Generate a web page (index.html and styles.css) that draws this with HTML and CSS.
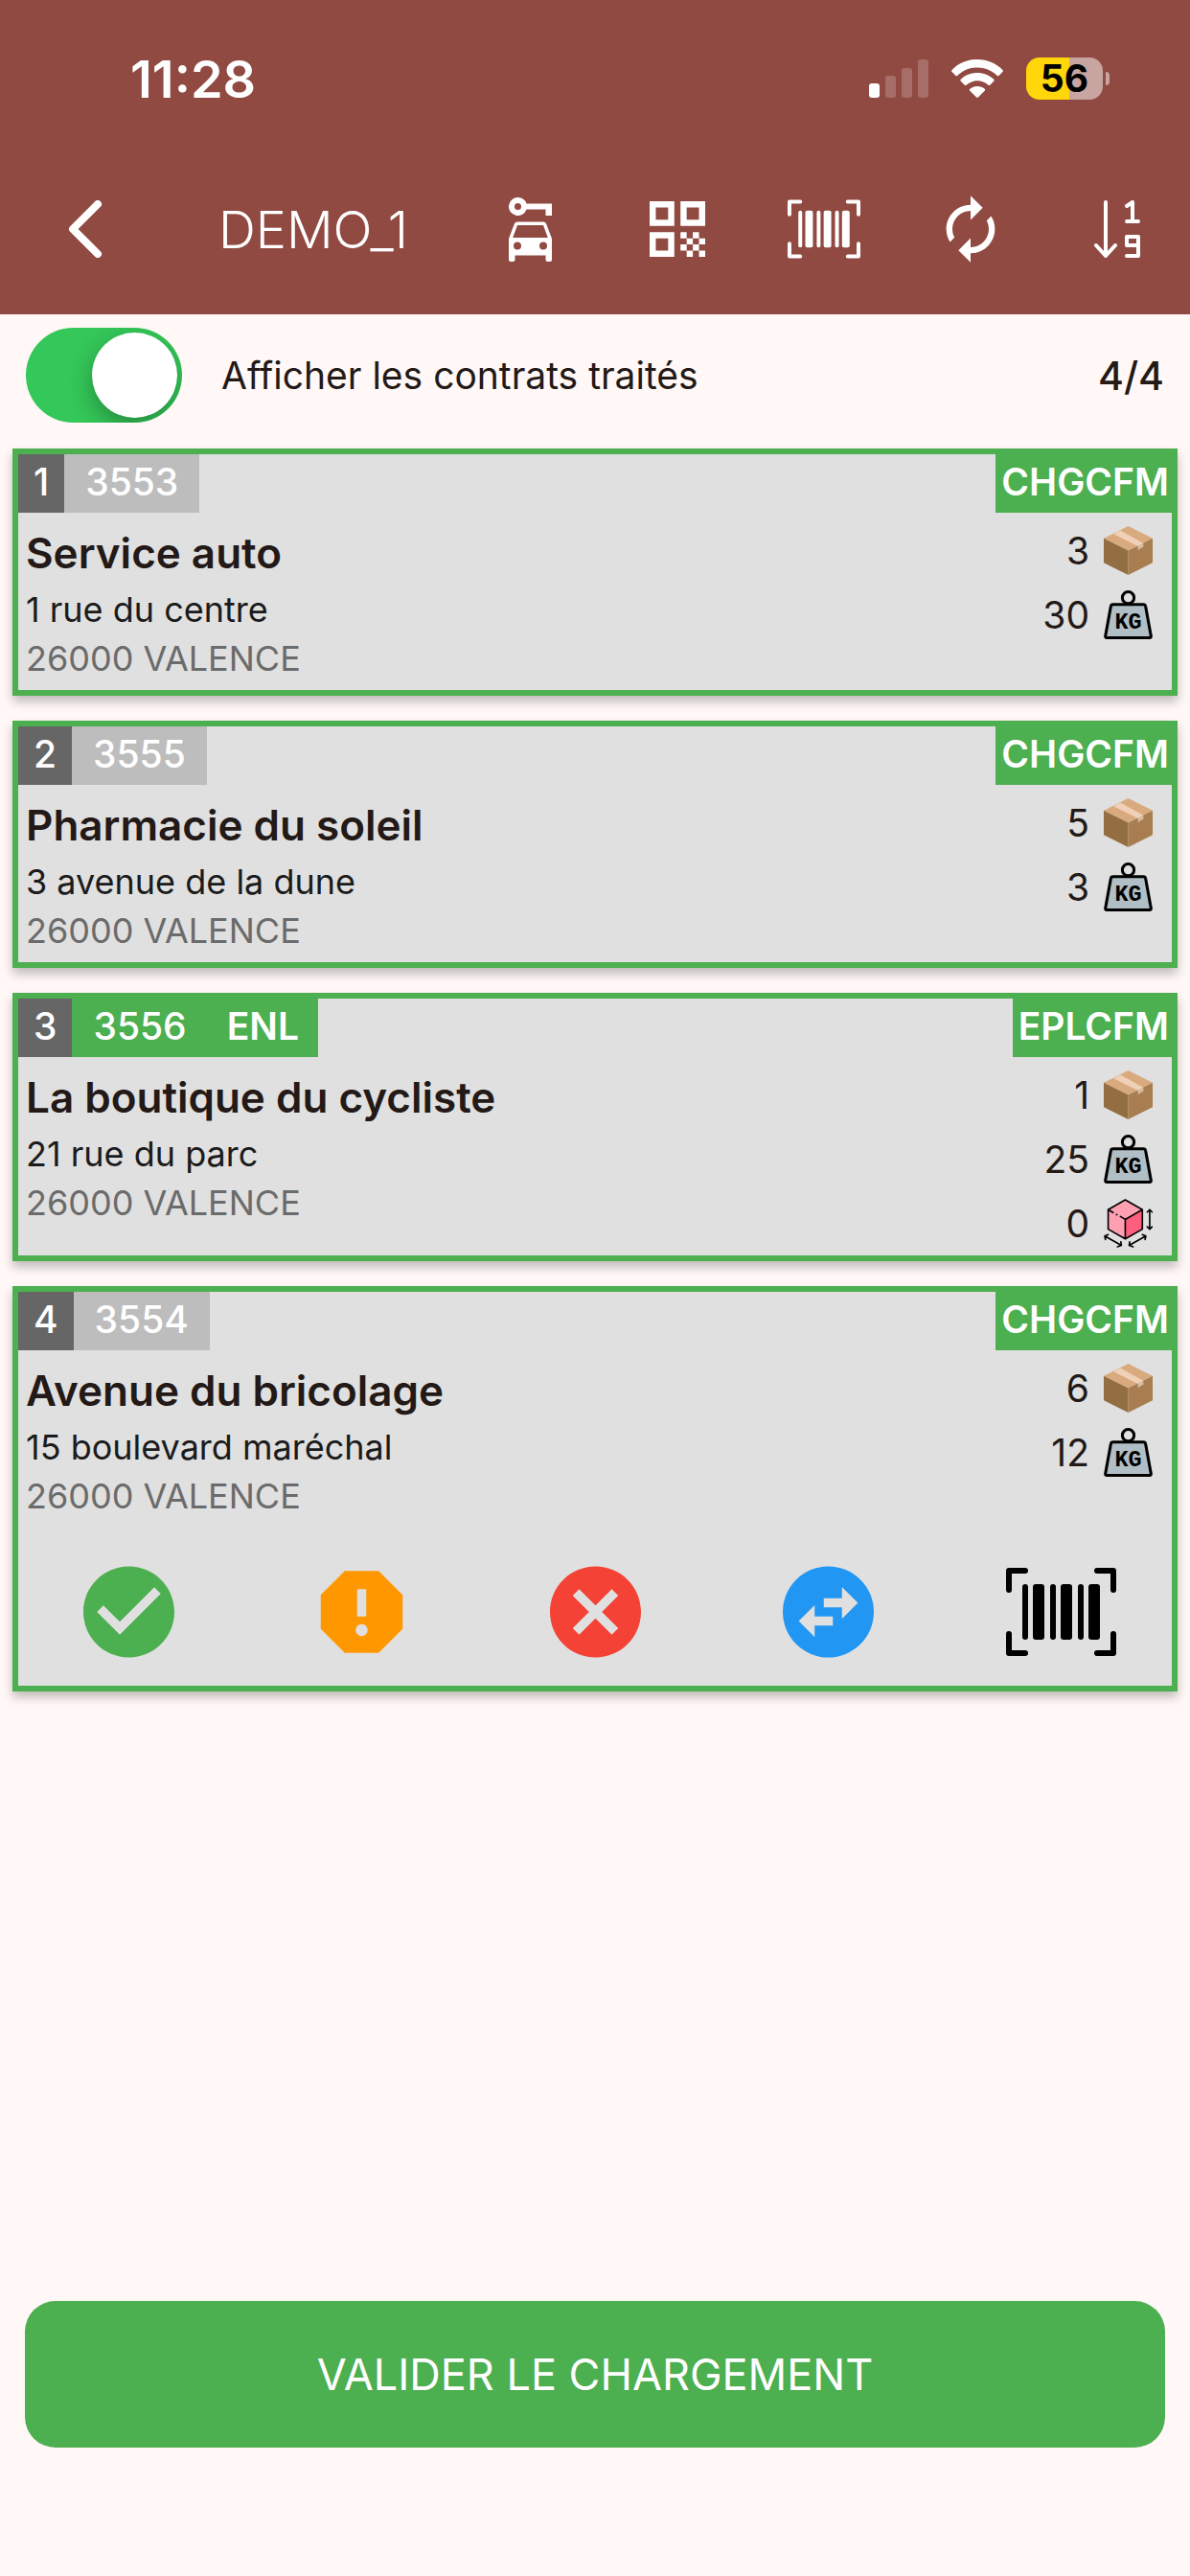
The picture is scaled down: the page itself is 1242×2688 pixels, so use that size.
FILE: index.html
```html
<!DOCTYPE html>
<html lang="fr">
<head>
    <meta charset="UTF-8">
    <meta name="viewport" content="width=device-width, initial-scale=1.0">
    <title>DEMO_1</title>
    <link rel="stylesheet" href="styles.css">
</head>
<body>
    <!-- Shared icons -->
    <svg class="sprite" aria-hidden="true">
        <symbol id="icon-barcode" viewBox="0 0 115 92">
            <g fill="none" stroke="currentColor" stroke-width="6" stroke-linecap="round" stroke-linejoin="round">
                <path d="M3 23V3h17M95 3h17v20M112 69v20H95M20 89H3V69"/>
            </g>
            <g fill="currentColor">
                <rect x="17" y="17" width="6" height="58" rx="3"/>
                <rect x="28" y="17" width="12" height="58" rx="3"/>
                <rect x="46" y="17" width="6" height="58" rx="3"/>
                <rect x="57" y="17" width="12" height="58" rx="3"/>
                <rect x="75" y="17" width="6" height="58" rx="3"/>
                <rect x="86" y="17" width="12" height="58" rx="3"/>
            </g>
        </symbol>
        <symbol id="icon-package" viewBox="0 0 50 50">
            <path fill="#d9aa7e" d="M25 0l25 12.500-25 12.500L0 12.500z"/>
            <path fill="#926e42" d="M0 12.500l25 12.500v25L0 37.500z"/>
            <path fill="#a87e50" d="M50 12.500L25 25v25l25-12.500z"/>
            <path fill="#f0d0b7" d="M17 4.500l23.500 13-5.500 3L10 8z"/>
            <path fill="#d8bda5" d="M35 20.500l5.500-3v4.500l-1.500-.5-1.500 2-1-.5-1.500 2.500z"/>
        </symbol>
        <symbol id="icon-weight" viewBox="0 0 50 50">
            <circle cx="25" cy="7.500" r="6" fill="none" stroke="#000" stroke-width="3"/>
            <path fill="#b0bec5" stroke="#000" stroke-width="3" stroke-linejoin="round" d="M9.500 14.500h31q2 0 2.300 2l5.500 30q.3 2-1.500 2H3.200q-1.800 0-1.500-2l5.500-30q.3-2 2.300-2z"/>
            <text class="weight-text" x="25" y="39" text-anchor="middle">KG</text>
        </symbol>
        <symbol id="icon-volume" viewBox="0 0 50 50">
            <path fill="#ff9fb2" d="M22 1l17.500 10L22 21 4.500 11z"/>
            <path fill="#ff9fb2" d="M4.500 11L22 21v20L4.500 31z"/>
            <path fill="#ff5f7f" d="M39.500 11L22 21v20l17.500-10z"/>
            <g fill="none" stroke="#000" stroke-width="1.600" stroke-linecap="round" stroke-linejoin="round">
                <path d="M22 1l17.500 10v20L22 41 4.500 31V11zM22 21v20M22 21l17.500-10M22 21l-5-3M4.500 11l5 3M13 16l.5.3"/>
                <path d="M47 11v20M44.500 13.500L47 11l2.500 2.500M44.500 28.500L47 31l2.500-2.500"/>
                <path d="M1 38l17 9.500M4.500 36.500L1 38l.7 3.500M17.500 44l.5 3.500-4 1.500"/>
                <path d="M43 38l-17 9.500M39.500 36.500L43 38l-.7 3.500M26.500 44l-.5 3.500 4 1.500"/>
            </g>
        </symbol>
    </svg>

    <header class="header">
        <div class="status-bar">
            <span class="time">11:28</span>
            <div class="status-icons">
                <svg class="signal" viewBox="0 0 62 40" fill="#fff">
                    <rect x="0" y="25" width="11" height="15" rx="3"/>
                    <rect x="17" y="17" width="11" height="23" rx="3" opacity=".2"/>
                    <rect x="34" y="9" width="11" height="31" rx="3" opacity=".2"/>
                    <rect x="51" y="0" width="11" height="40" rx="3" opacity=".2"/>
                </svg>
                <svg class="wifi" viewBox="0 0 54 40" fill="#fff">
                    <path d="M27 0C16.500 0 7 4.200 .6 11q-1 1 0 2L4.500 17q.8.700 1.700 0C11.500 11.700 19 8.500 27 8.500s15.500 3.200 20.800 8.500q.9.700 1.700 0l3.900-4q1-1 0-2C47 4.200 37.500 0 27 0z"/>
                    <path d="M27 14c-6.600 0-12.700 2.500-17.200 6.700q-1 1 0 2l4 4q.9.800 1.800 0C18.600 24 22.600 22.300 27 22.300s8.400 1.700 11.400 4.400q.9.800 1.800 0l4-4q1-1 0-2C39.700 16.500 33.600 14 27 14z"/>
                    <path d="M27 28c-3 0-5.700 1-7.700 2.700q-1 1 0 2l6.800 6.800q.9.900 1.800 0l6.800-6.800q1-1 0-2C32.700 29 30 28 27 28z"/>
                </svg>
                <span class="battery">56</span>
            </div>
        </div>
        <nav class="toolbar">
            <button class="back" aria-label="Retour">
                <svg viewBox="0 0 36 60" fill="none" stroke="#fff" stroke-width="8" stroke-linecap="round" stroke-linejoin="round"><path d="M31 4L5 30l26 26"/></svg>
            </button>
            <h1 class="title">DEMO_1</h1>
            <button class="tool" aria-label="Véhicule">
                <svg class="car" viewBox="0 0 45 67" fill="#fff" fill-rule="evenodd">
                    <path d="M9.500 0a9.500 9.500 0 0 1 9 6.500H45V19h-6.500v-6.500h-20A9.500 9.500 0 1 1 9.500 0zm0 6a3.500 3.500 0 1 0 0 7 3.500 3.500 0 0 0 0-7z"/>
                    <path d="M9 25.500h27q2.500 0 3.200 2.300L45 43v22q0 2-2 2h-2.500q-2 0-2-2v-4.500h-32V65q0 2-2 2H2q-2 0-2-2V43l5.800-15.200Q6.500 25.500 9 25.500zM9 29L4.200 42h36.600L36 29zM9 46.500a4 4 0 1 0 0 8 4 4 0 0 0 0-8zm27 0a4 4 0 1 0 0 8 4 4 0 0 0 0-8z"/>
                </svg>
            </button>
            <button class="tool" aria-label="QR code">
                <svg class="qr" viewBox="0 0 18 18" fill="#fff" fill-rule="evenodd">
                    <path d="M0 0h8v8H0zM2 2v4h4V2zM10 0h8v8h-8zM12 2v4h4V2zM0 10h8v8H0zM2 12v4h4v-4z"/>
                    <path d="M10 10h2v2h-2zM14 10h2v2h-2zM12 12h2v2h-2zM16 12h2v2h-2zM10 14h2v2h-2zM14 14h2v2h-2zM12 16h2v2h-2zM16 16h2v2h-2z"/>
                </svg>
            </button>
            <button class="tool" aria-label="Code-barres">
                <svg class="barcode-small"><use href="#icon-barcode"/></svg>
            </button>
            <button class="tool" aria-label="Actualiser">
                <svg class="tool-icon" viewBox="0 0 24 24" fill="#fff"><path d="M12 6v3l4-4-4-4v3c-4.420 0-8 3.580-8 8 0 1.570.46 3.030 1.240 4.260L6.700 14.800c-.45-.83-.7-1.790-.7-2.800 0-3.310 2.690-6 6-6zm6.760 1.740L17.300 9.200c.44.84.7 1.790.7 2.800 0 3.310-2.690 6-6 6v-3l-4 4 4 4v-3c4.420 0 8-3.580 8-8 0-1.570-.46-3.030-1.240-4.260z"/></svg>
            </button>
            <button class="tool" aria-label="Trier">
                <svg class="sort" viewBox="0 0 48 60" fill="none" stroke="#fff" stroke-width="4" stroke-linecap="round" stroke-linejoin="round">
                    <path d="M12 2v56M2 47l10 11 10-11"/>
                    <path d="M34 6l6-4v20M34 22h12M46 47H34V38h12v20H34"/>
                </svg>
            </button>
        </nav>
    </header>

    <main class="content">
        <div class="filter">
            <input type="checkbox" role="switch" class="switch" id="show-done" checked>
            <label for="show-done">Afficher les contrats traités</label>
            <span class="counter">4/4</span>
        </div>

        <section class="card">
            <div class="card-top">
                <span class="order">1</span>
                <span class="number">3553</span>
                <span class="state">CHGCFM</span>
            </div>
            <div class="card-body">
                <div class="info">
                    <h2>Service auto</h2>
                    <p class="street">1 rue du centre</p>
                    <p class="city">26000 VALENCE</p>
                </div>
                <ul class="amounts">
                    <li>3 <svg><use href="#icon-package"/></svg></li>
                    <li>30 <svg><use href="#icon-weight"/></svg></li>
                </ul>
            </div>
        </section>

        <section class="card">
            <div class="card-top">
                <span class="order">2</span>
                <span class="number">3555</span>
                <span class="state">CHGCFM</span>
            </div>
            <div class="card-body">
                <div class="info">
                    <h2>Pharmacie du soleil</h2>
                    <p class="street">3 avenue de la dune</p>
                    <p class="city">26000 VALENCE</p>
                </div>
                <ul class="amounts">
                    <li>5 <svg><use href="#icon-package"/></svg></li>
                    <li>3 <svg><use href="#icon-weight"/></svg></li>
                </ul>
            </div>
        </section>

        <section class="card">
            <div class="card-top">
                <span class="order">3</span>
                <span class="number pickup">3556</span>
                <span class="kind">ENL</span>
                <span class="state">EPLCFM</span>
            </div>
            <div class="card-body">
                <div class="info">
                    <h2>La boutique du cycliste</h2>
                    <p class="street">21 rue du parc</p>
                    <p class="city">26000 VALENCE</p>
                </div>
                <ul class="amounts">
                    <li>1 <svg><use href="#icon-package"/></svg></li>
                    <li>25 <svg><use href="#icon-weight"/></svg></li>
                    <li>0 <svg><use href="#icon-volume"/></svg></li>
                </ul>
            </div>
        </section>

        <section class="card">
            <div class="card-top">
                <span class="order">4</span>
                <span class="number">3554</span>
                <span class="state">CHGCFM</span>
            </div>
            <div class="card-body">
                <div class="info">
                    <h2>Avenue du bricolage</h2>
                    <p class="street">15 boulevard maréchal</p>
                    <p class="city">26000 VALENCE</p>
                </div>
                <ul class="amounts">
                    <li>6 <svg><use href="#icon-package"/></svg></li>
                    <li>12 <svg><use href="#icon-weight"/></svg></li>
                </ul>
            </div>
            <div class="actions">
                <button class="action" aria-label="Valider">
                    <svg viewBox="0 0 24 24" fill="#4caf50"><path d="M12 2C6.480 2 2 6.480 2 12s4.480 10 10 10 10-4.480 10-10S17.520 2 12 2zm-2 15l-5-5 1.410-1.410L10 14.170l7.590-7.590L19 8l-9 9z"/></svg>
                </button>
                <button class="action" aria-label="Signaler">
                    <svg viewBox="0 0 24 24" fill="#ff9800"><path d="M15.730 3H8.270L3 8.270v7.460L8.270 21h7.460L21 15.730V8.270L15.730 3zM12 17.300c-.72 0-1.300-.58-1.300-1.300s.58-1.300 1.300-1.300 1.300.58 1.300 1.300-.58 1.300-1.300 1.300zm1-4.300h-2V7h2v6z"/></svg>
                </button>
                <button class="action" aria-label="Refuser">
                    <svg viewBox="0 0 24 24" fill="#f44336"><path d="M12 2C6.470 2 2 6.470 2 12s4.470 10 10 10 10-4.470 10-10S17.530 2 12 2zm5 13.590L15.590 17 12 13.410 8.410 17 7 15.590 10.590 12 7 8.410 8.410 7 12 10.590 15.590 7 17 8.410 13.410 12 17 15.590z"/></svg>
                </button>
                <button class="action" aria-label="Transférer">
                    <svg viewBox="0 0 24 24" fill="#2196f3" fill-rule="evenodd"><path d="M12 2a10 10 0 1 0 0 20 10 10 0 0 0 0-20zM15 6.500l3.500 3.500-3.500 3.500V11h-4V9h4zM9 17.500L5.500 14 9 10.500V13h4v2H9z"/></svg>
                </button>
                <button class="action" aria-label="Scanner">
                    <svg><use href="#icon-barcode"/></svg>
                </button>
            </div>
        </section>
    </main>

    <footer class="footer">
        <button class="submit">VALIDER LE CHARGEMENT</button>
    </footer>
</body>
</html>
```

FILE: styles.css
```css
/* General */
* {
    box-sizing: border-box;
}

body {
    font-family: 'Inter', sans-serif;
    background-color: #fff8f6;
    color: #231917;
    margin: 0;
    min-height: 100vh;
    display: flex;
    flex-direction: column;
}

button {
    background: none;
    border: none;
    padding: 0;
    margin: 0;
    color: inherit;
    font-family: inherit;
    cursor: pointer;
}

h1, h2, p, ul {
    margin: 0;
    padding: 0;
}

svg {
    display: block;
}

.sprite {
    display: none;
}

/* Header */
.header {
    background-color: #904a42;
    color: #fff;
}

.status-bar {
    display: flex;
    justify-content: space-between;
    align-items: center;
    height: 150px;
    padding: 14px 84px 0 136px;
}

.time {
    font-size: 54px;
    font-weight: 600;
}

.status-icons {
    display: flex;
    align-items: center;
    gap: 24px;
}

.signal {
    width: 62px;
    height: 40px;
}

.wifi {
    width: 54px;
    height: 40px;
}

.battery {
    position: relative;
    width: 80px;
    height: 44px;
    margin-right: 7px;
    border-radius: 14px;
    background: linear-gradient(to right, #ffd60a 56%, #c9a5a1 56%);
    color: #000;
    font-size: 39px;
    font-weight: 700;
    line-height: 44px;
    text-align: center;
}

.battery::after {
    content: "";
    position: absolute;
    right: -7px;
    top: 15px;
    width: 4px;
    height: 14px;
    border-radius: 0 4px 4px 0;
    background-color: #c9a5a1;
}

.toolbar {
    display: flex;
    align-items: center;
    height: 178px;
}

.back {
    padding: 0 71px;
}

.back svg {
    width: 36px;
    height: 60px;
}

.title {
    flex: 1;
    padding-left: 50px;
    font-size: 54px;
    font-weight: 300;
}

.tool {
    display: flex;
    justify-content: center;
    align-items: center;
    width: 153px;
    height: 153px;
}

.car {
    width: 45px;
    height: 67px;
}

.qr {
    width: 58px;
    height: 58px;
}

.barcode-small {
    width: 76px;
    height: 62px;
}

.tool-icon {
    width: 76px;
    height: 76px;
}

.sort {
    width: 48px;
    height: 60px;
}

/* Filter row */
.filter {
    display: flex;
    align-items: center;
    height: 127px;
    margin-bottom: -13px;
    padding: 0 14px;
    font-size: 39px;
}

.filter label {
    flex: 1;
    padding-left: 41px;
}

.switch {
    appearance: none;
    width: 163px;
    height: 99px;
    margin: 0;
    padding: 5px;
    border-radius: 50px;
    background-color: #34c759;
    overflow: hidden;
}

.switch::before {
    content: "";
    display: block;
    width: 89px;
    height: 89px;
    margin-left: auto;
    border-radius: 50%;
    background-color: #fff;
    box-shadow: 0 9px 24px rgba(0, 0, 0, 0.3);
}

.counter {
    font-size: 41px;
    font-weight: 500;
}

/* Cards */
.content {
    display: flex;
    flex-direction: column;
    flex: 1;
    gap: 26px;
    padding: 0 13px;
}

.card {
    border: 6px solid #4caf50;
    background-color: #e0e0e0;
    box-shadow: 0 6px 10px rgba(0, 0, 0, 0.25);
}

.card-top {
    display: flex;
    color: #fff;
    font-size: 39px;
    font-weight: 500;
    line-height: 57px;
}

.card-top span {
    padding: 0 20px 4px;
}

.card-top .order {
    padding: 0 16px 4px;
    background-color: #666;
}

.card-top .number {
    padding: 0 22px 4px;
    background-color: #bdbdbd;
}

.kind {
    font-weight: 600;
}

.card-top .pickup, .kind, .state {
    background-color: #4caf50;
}

.card-top .state {
    margin-left: auto;
    padding: 0 3px 4px 6px;
    font-weight: 600;
}

.card-body {
    display: flex;
    justify-content: space-between;
    min-height: 185px;
    padding: 6px 20px 0 8px;
}

.card h2 {
    padding-top: 2px;
    font-size: 44px;
    font-weight: 600;
    line-height: 68px;
}

.street, .city {
    font-size: 36px;
    line-height: 51px;
}

.street {
    color: #1b1b1b;
}

.city {
    color: #6b6b6b;
}

.amounts {
    list-style: none;
    font-size: 39px;
}

.amounts li {
    display: flex;
    justify-content: flex-end;
    align-items: center;
    gap: 15px;
    height: 67px;
}

.amounts svg {
    width: 51px;
    height: 51px;
}

.weight-text {
    font-family: 'Liberation Mono', monospace;
    font-size: 23px;
    font-weight: 700;
}

/* Card actions */
.actions {
    display: flex;
    margin: 0 -6px;
    padding: 31px 0 20px;
}

.action {
    flex: 1;
    display: flex;
    justify-content: center;
    color: #000;
}

.action svg {
    width: 115px;
    height: 114px;
}

/* Footer */
.footer {
    padding: 0 26px 134px;
}

.submit {
    width: 100%;
    height: 153px;
    border-radius: 32px;
    background-color: #4caf50;
    color: #fff;
    font-size: 45px;
    font-weight: 400;
}
```
